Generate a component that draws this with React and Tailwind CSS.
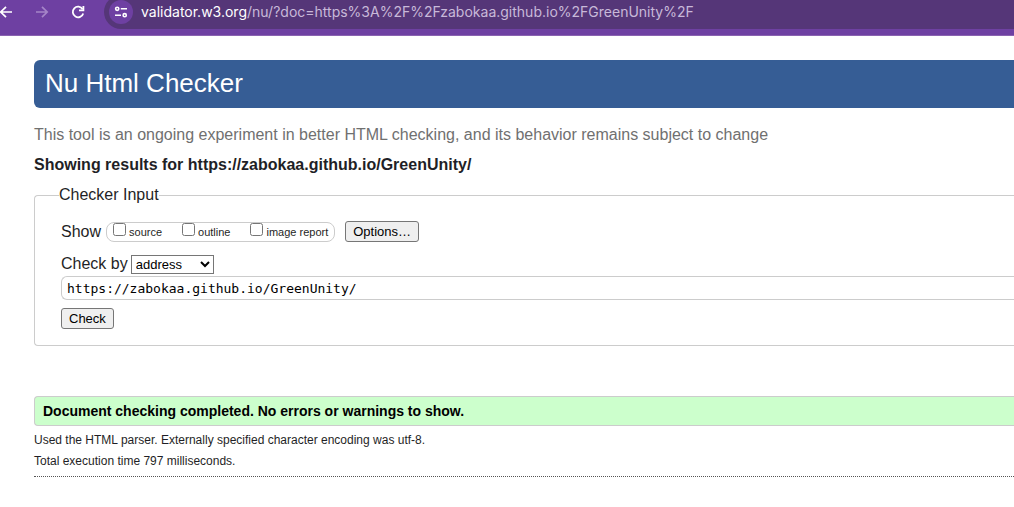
function SiteSettingsIcon() {
  return (
    <svg width="14" height="12" viewBox="0 0 14 12" fill="none" stroke="currentColor" strokeWidth="1.6" aria-hidden="true">
      <circle cx="3.2" cy="2.8" r="1.6" />
      <path d="M6.8 2.8H13M1 9.2H7" />
      <circle cx="10.7" cy="9.2" r="1.6" />
    </svg>
  );
}

function ArrowIcon({ forward }) {
  return (
    <svg width="14" height="12" viewBox="0 0 14 12" fill="none" stroke="currentColor" strokeWidth="1.7" aria-hidden="true">
      <path d={forward ? "M1 6H12M7 0.8L12.2 6L7 11.2" : "M13 6H2M7 0.8L1.8 6L7 11.2"} />
    </svg>
  );
}

function ReloadIcon() {
  return (
    <svg width="14" height="14" viewBox="0 0 14 14" fill="none" stroke="currentColor" strokeWidth="1.8" aria-hidden="true">
      <path d="M11.6 4.2A5.3 5.3 0 1 0 12.2 8.4" />
      <path d="M12.4 1V5.3H8" />
    </svg>
  );
}

function BrowserBar() {
  return (
    <header className="h-9 overflow-hidden border-b border-[#8a63b0] bg-[#6e40a2] text-white">
      <div className="-mt-[5px] flex h-[34px] items-center">
        <button type="button" aria-label="Back" className="-ml-px">
          <ArrowIcon />
        </button>
        <button type="button" aria-label="Forward" className="ml-[22px] text-[#a585c8]">
          <ArrowIcon forward />
        </button>
        <button type="button" aria-label="Reload" className="ml-[22px]">
          <ReloadIcon />
        </button>
        <div className="ml-[19px] flex h-full min-w-0 grow items-center gap-2 rounded-l-full bg-[#553678] pl-[5px]">
          <button
            type="button"
            aria-label="View site information"
            className="flex size-6 shrink-0 items-center justify-center rounded-full bg-[#6e40a2]"
          >
            <SiteSettingsIcon />
          </button>
          <p className="truncate font-['Inter',sans-serif] text-[14px] leading-5 text-[#c8b9d9]">
            <span className="text-white">validator.w3.org</span>
            /nu/?doc=https%3A%2F%2Fzabokaa.github.io%2FGreenUnity%2F
          </p>
        </div>
      </div>
    </header>
  );
}

const buttonClass =
  "h-[21px] rounded-[3px] border border-[#767676] bg-[#efefef] px-[7px] text-[13px] leading-[15px] text-black";

function ShowOption({ id, label }) {
  return (
    <span className="flex items-start gap-[3px]">
      <input id={id} type="checkbox" className="size-[13px]" />
      <label htmlFor={id} className="text-[11px] leading-[18px]">
        {label}
      </label>
    </span>
  );
}

function CheckerForm() {
  return (
    <form onSubmit={(event) => event.preventDefault()}>
      <fieldset className="rounded-l border border-r-0 border-[#ccc] pb-4 pl-[26px]">
        <legend className="-ml-[2px] leading-6">Checker Input</legend>
        <div className="mt-[14px] flex items-center">
          <span className="leading-5">Show</span>
          <div className="ml-[5px] flex h-5 gap-5 rounded-lg border border-[#ccc] px-[6px]">
            <ShowOption id="show-source" label="source" />
            <ShowOption id="show-outline" label="outline" />
            <ShowOption id="show-image-report" label="image report" />
          </div>
          <button type="button" className={"ml-[10px] " + buttonClass}>
            Options…
          </button>
        </div>
        <div className="mt-3 flex items-center gap-[3px]">
          <label htmlFor="check-by" className="leading-5">
            Check by
          </label>
          <select
            id="check-by"
            defaultValue="address"
            className="h-[19px] w-[83px] border border-[#767676] bg-white text-[13px] text-black"
          >
            <option value="address">address</option>
            <option value="upload">file upload</option>
            <option value="text">text input</option>
          </select>
        </div>
        <input
          type="url"
          aria-label="Address of page to check"
          defaultValue="https://zabokaa.github.io/GreenUnity/"
          className="mt-[2px] block h-6 w-full rounded-l-md border border-r-0 border-[#ccc] px-[5px] font-['DejaVu_Sans_Mono',monospace] text-[13px] text-black"
        />
        <button type="submit" className={"mt-2 block " + buttonClass}>
          Check
        </button>
      </fieldset>
    </form>
  );
}

export default function App() {
  return (
    <div className="bg-white font-['Liberation_Sans',Arial,sans-serif] text-[16px] text-[#1f1f26]">
      <BrowserBar />
      <main className="pl-[34px] pt-6">
        <h1 className="rounded-l-md bg-[#365d95] px-[11px] pb-[2px] text-[26px] leading-[46px] text-white">
          Nu Html Checker
        </h1>
        <p className="mt-[17px] leading-5 text-[#707070]">
          This tool is an ongoing experiment in better HTML checking, and its behavior remains subject to change
        </p>
        <h2 className="mb-2 mt-[10px] font-bold leading-5">Showing results for https://zabokaa.github.io/GreenUnity/</h2>
        <CheckerForm />
        <section aria-label="Results" className="mt-[50px] border-b border-dotted border-[#555] pb-[5px] text-[12px]">
          <p className="rounded-l border border-r-0 border-[#ccc] bg-[#cfc] px-2 text-[14px] font-bold leading-7 text-black">
            Document checking completed. No errors or warnings to show.
          </p>
          <p className="mt-1 leading-5">Used the HTML parser. Externally specified character encoding was utf-8.</p>
          <p className="mt-px leading-5">Total execution time 797 milliseconds.</p>
        </section>
      </main>
    </div>
  );
}
